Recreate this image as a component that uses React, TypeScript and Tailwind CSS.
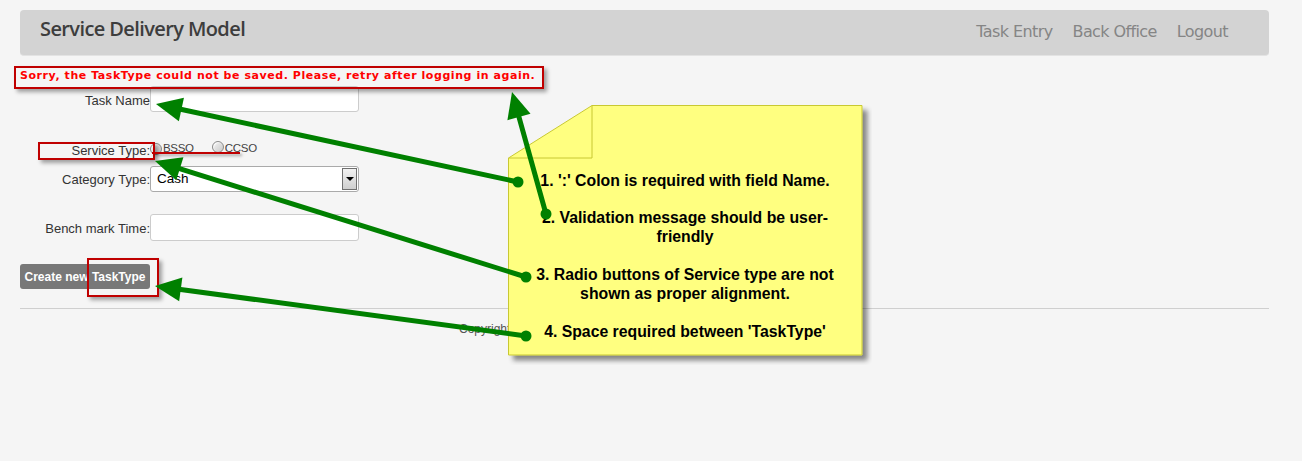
import React from "react";

type Arrow = { s: [number, number]; t: [number, number] };

const arrows: Arrow[] = [
  { s: [518, 182], t: [156, 104] },
  { s: [546, 214], t: [512, 92] },
  { s: [526, 277], t: [155, 161] },
  { s: [526, 336], t: [155, 286] },
];

function ArrowShape({ a }: { a: Arrow }) {
  const [sx, sy] = a.s;
  const [tx, ty] = a.t;
  const dx = tx - sx;
  const dy = ty - sy;
  const len = Math.hypot(dx, dy);
  const ux = dx / len;
  const uy = dy / len;
  const L = 26;
  const W = 12;
  const bx = tx - ux * L;
  const by = ty - uy * L;
  const nx = -uy;
  const ny = ux;
  const pts = `${tx},${ty} ${bx + nx * W},${by + ny * W} ${bx - nx * W},${by - ny * W}`;
  return (
    <g>
      <line x1={sx} y1={sy} x2={bx + ux * 2} y2={by + uy * 2} stroke="#008000" strokeWidth={5} strokeLinecap="round" />
      <polygon points={pts} fill="#008000" />
      <circle cx={sx} cy={sy} r={5.5} fill="#008000" />
    </g>
  );
}

function Radio() {
  return (
    <span className="inline-block w-[12px] h-[12px] rounded-full border border-[#8a8a8a] bg-gradient-to-br from-[#f4f4f4] to-[#c9c9c9] shadow-[inset_1px_1px_1px_rgba(255,255,255,0.8)]" />
  );
}

export default function App() {
  return (
    <div className="relative min-h-[461px] w-full bg-[#f5f5f5] overflow-hidden" style={{ fontFamily: '"Liberation Sans", Arial, sans-serif' }}>
      <div className="pl-[20px] pr-[33px] pt-[10px]">
        {/* navbar */}
        <div className="h-[46px] rounded-[4px] bg-[#d3d3d3] flex items-center justify-between pl-[20px] pr-[41px] border-b border-[#e3e3e3]">
          <div className="text-[20px] text-[#3d3d3d] tracking-[-0.6px] font-semibold leading-none -mt-[7px]" style={{ fontFamily: '"Open Sans", "DejaVu Sans", sans-serif' }}>
            Service Delivery Model
          </div>
          <div className="flex items-center gap-[20px] text-[16px] text-[#858585] leading-none -mt-[1px]" style={{ fontFamily: '"DejaVu Sans", sans-serif' }}>
            <span className="tracking-[-0.6px]">Task Entry</span>
            <span className="tracking-[-0.6px]">Back Office</span>
            <span className="tracking-[-0.6px]">Logout</span>
          </div>
        </div>

        {/* error message */}
        <div className="mt-[13px] h-[14px] leading-[14px] text-[11px] font-bold text-[#ff0000] tracking-[0.56px]" style={{ fontFamily: '"DejaVu Sans", Verdana, sans-serif' }}>
          Sorry, the TaskType could not be saved. Please, retry after logging in again.
        </div>

        {/* form */}
        <div className="text-[13px] text-[#333]">
          <div className="mt-[3px] flex items-center h-[26px]">
            <label className="w-[130px] text-right pt-[3px]">Task Name</label>
            <div className="w-[209px] h-[26px] bg-white border border-[#cccccc] rounded-[3px]" />
          </div>

          <div className="mt-[28px] flex items-start h-[20px]">
            <label className="w-[130px] text-right pt-[3px] leading-[15px]">Service Type:</label>
            <div className="flex items-center -mt-[1px]">
              <Radio />
              <span className="text-[11.5px] ml-[1px] leading-[13px] text-[#444] tracking-[-0.3px]">BSSO</span>
              <span className="ml-[18px]"><Radio /></span>
              <span className="text-[11.5px] ml-[1px] leading-[13px] text-[#444] tracking-[-0.3px]">CCSO</span>
            </div>
          </div>

          <div className="mt-[6px] flex items-center h-[26px]">
            <label className="w-[130px] text-right pt-[2px]">Category Type:</label>
            <div className="relative w-[209px] h-[26px] bg-white border border-[#aaaaaa] rounded-[3px] flex items-center pl-[6px] text-[13.5px] text-black">
              Cash
              <div className="absolute right-[1px] top-[1px] w-[15px] h-[22px] border border-[#707070] bg-gradient-to-b from-[#f2f2f2] to-[#cfcfcf] flex items-center justify-center">
                <span className="block w-0 h-0 border-l-[4px] border-r-[4px] border-t-[4px] border-l-transparent border-r-transparent border-t-black" />
              </div>
            </div>
          </div>

          <div className="mt-[22px] flex items-center h-[27px]">
            <label className="w-[130px] text-right pt-[2px]">Bench mark Time:</label>
            <div className="w-[209px] h-[27px] bg-white border border-[#cccccc] rounded-[3px]" />
          </div>

          <div className="mt-[23px] h-[25px]">
            <div className="w-[130px] h-[25px] rounded-[3px] bg-[#787878] text-white text-[12px] font-bold flex items-center justify-center">
              Create new TaskType
            </div>
          </div>
        </div>

        <div className="mt-[19px] border-t border-[#cfcfcf]" />
        <div className="mt-[13px] ml-[439px] whitespace-nowrap text-[12px] text-[#555] leading-[14px]">
          Copyright
        </div>
      </div>

      {/* annotation red boxes */}
      <div className="absolute left-[14px] top-[66px] w-[530px] h-[23px] border-2 border-[#c00000] shadow-[3px_3px_4px_rgba(0,0,0,0.35)]" />
      <div className="absolute left-[38px] top-[142px] w-[117px] h-[18px] border-2 border-[#c00000] shadow-[3px_3px_4px_rgba(0,0,0,0.35)]" />
      <div className="absolute left-[152px] top-[152px] w-[88px] h-[2px] bg-[#c00000] shadow-[2px_2px_3px_rgba(0,0,0,0.35)]" />
      <div className="absolute left-[87px] top-[258px] w-[72px] h-[39px] border-2 border-[#c00000] shadow-[3px_3px_4px_rgba(0,0,0,0.35)]" />

      {/* sticky note */}
      <div className="absolute left-[508px] top-[105px] w-[364px] h-[260px]">
        <svg width="364" height="260" className="absolute left-0 top-0">
          <defs>
            <filter id="ns" x="-10%" y="-10%" width="130%" height="130%">
              <feDropShadow dx="5" dy="5" stdDeviation="2.5" floodColor="#000" floodOpacity="0.45" />
            </filter>
          </defs>
          <polygon points="0.5,53 84,0.5 354,0.5 354,250 0.5,250" fill="#ffff80" stroke="#c8c832" strokeWidth="1" filter="url(#ns)" />
          <polyline points="0.5,53 84,53 84,0.5" fill="none" stroke="#c8c832" strokeWidth="1" />
        </svg>
        <div className="absolute left-0 top-[66px] w-[354px] text-center text-[15.8px] font-bold text-black leading-[19px]" style={{ fontFamily: '"Liberation Sans", Arial, sans-serif' }}>
          <p>1. ':' Colon is required with field Name.</p>
          <p className="mt-[18px]">2. Validation message should be user-<br />friendly</p>
          <p className="mt-[19px]">3. Radio buttons of Service type are not<br />shown as proper alignment.</p>
          <p className="mt-[19px]">4. Space required between 'TaskType'</p>
        </div>
      </div>

      {/* arrows */}
      <svg width="1302" height="461" className="absolute left-0 top-0 pointer-events-none">
        {arrows.map((a, i) => (
          <ArrowShape key={i} a={a} />
        ))}
      </svg>
    </div>
  );
}
